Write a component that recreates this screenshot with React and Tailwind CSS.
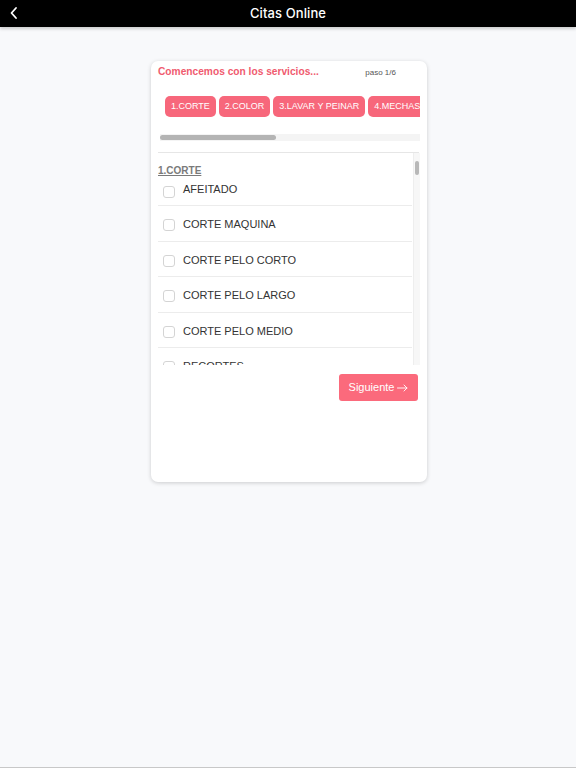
import React from "react";

const chips = ["1.CORTE", "2.COLOR", "3.LAVAR Y PEINAR", "4.MECHAS", "5.TRATAMIENTOS"];
const items = ["AFEITADO", "CORTE MAQUINA", "CORTE PELO CORTO", "CORTE PELO LARGO", "CORTE PELO MEDIO", "RECORTES"];

export default function App() {
  return (
    <div className="min-h-[768px] w-[576px] bg-[#f8f9fb] border-b border-[#c8c8c8] font-['Liberation_Sans',Arial,sans-serif]">
      <div className="relative h-[27px] bg-black flex items-center justify-center shadow-[0_2px_3px_rgba(0,0,0,0.18)]">
        <svg className="absolute left-[9px] top-[6px]" width="10" height="14" viewBox="0 0 10 14" fill="none">
          <path d="M7 2 L2.5 7 L7 12" stroke="white" strokeWidth="1.8" strokeLinecap="round" strokeLinejoin="round" />
        </svg>
        <span className="text-white text-[13px] font-['Inter',sans-serif] font-medium tracking-[0.1px]">Citas Online</span>
      </div>

      <div className="ml-[151px] mt-[34px] w-[276px] h-[421px] bg-white rounded-[7px] shadow-[0_1px_4px_rgba(0,0,0,0.18)] pt-[5px] pl-[7px] pr-[7px]">
        <div className="flex items-center justify-between h-[12px]">
          <span className="text-[#f05b6f] text-[10.2px] font-bold -mt-[1px]">Comencemos con los servicios...</span>
          <span className="text-[#555] text-[8px] mr-[24px] mt-[2px]">paso 1/6</span>
        </div>

        <div className="ml-[2px] w-[260px] mt-[18px] overflow-hidden">
          <div className="flex gap-[3px] pl-[5px] h-[21px]">
            {chips.map((c) => (
              <div key={c} className="shrink-0 h-[21px] px-[6px] rounded-[5px] bg-[#f7677b] text-white text-[9px] font-medium flex items-center whitespace-nowrap">
                {c}
              </div>
            ))}
          </div>
          <div className="mt-[17px] h-[7px] bg-[#f4f4f4] relative">
            <div className="absolute left-0 top-[1px] h-[5px] w-[116px] rounded-full bg-[#b4b4b4]" />
          </div>
        </div>

        <div className="mt-[11px] h-px bg-[#e6e6e6] w-[261px]" />

        <div className="relative h-[212px] w-[262px] overflow-hidden">
          <div className="absolute right-0 top-[0px] bottom-0 w-[7px] bg-[#f7f7f7] border-l border-[#eee]">
            <div className="mx-auto mt-[8px] w-[4px] h-[14px] rounded-full bg-[#b8b8b8]" />
          </div>
          <div className="pt-[12px] pr-[8px]">
            <div className="text-[10px] font-bold text-[#7a7a7a] underline leading-[11px]">1.CORTE</div>
            <div>
              {items.map((it, i) =>
                i === 0 ? (
                  <div key={it} className="flex items-center h-[30px] border-b border-[#ececec]">
                    <div className="ml-[5px] w-[12px] h-[12px] rounded-[3px] border border-[#d4d4d4] bg-white mt-[3px]" />
                    <span className="ml-[8px] text-[11px] text-[#333] -mt-[2px]">{it}</span>
                  </div>
                ) : (
                  <div key={it} className="flex items-center h-[35.5px] border-b border-[#ececec]">
                    <div className="ml-[5px] w-[12px] h-[12px] rounded-[3px] border border-[#d4d4d4] bg-white mt-[4px]" />
                    <span className="ml-[8px] text-[11px] text-[#333] mt-[2px]">{it}</span>
                  </div>
                )
              )}
            </div>
          </div>
        </div>

        <div className="flex justify-end mt-[9px] pr-[2px]">
          <button className="w-[79px] h-[27px] rounded-[3px] bg-[#fb6a7c] text-white text-[11px] flex items-center justify-center gap-[3px]">
            Siguiente
            <svg width="11" height="8" viewBox="0 0 11 8" fill="none">
              <path d="M0.5 4 H10 M7 1 L10 4 L7 7" stroke="white" strokeWidth="0.9" strokeLinecap="round" strokeLinejoin="round" />
            </svg>
          </button>
        </div>
      </div>
    </div>
  );
}
